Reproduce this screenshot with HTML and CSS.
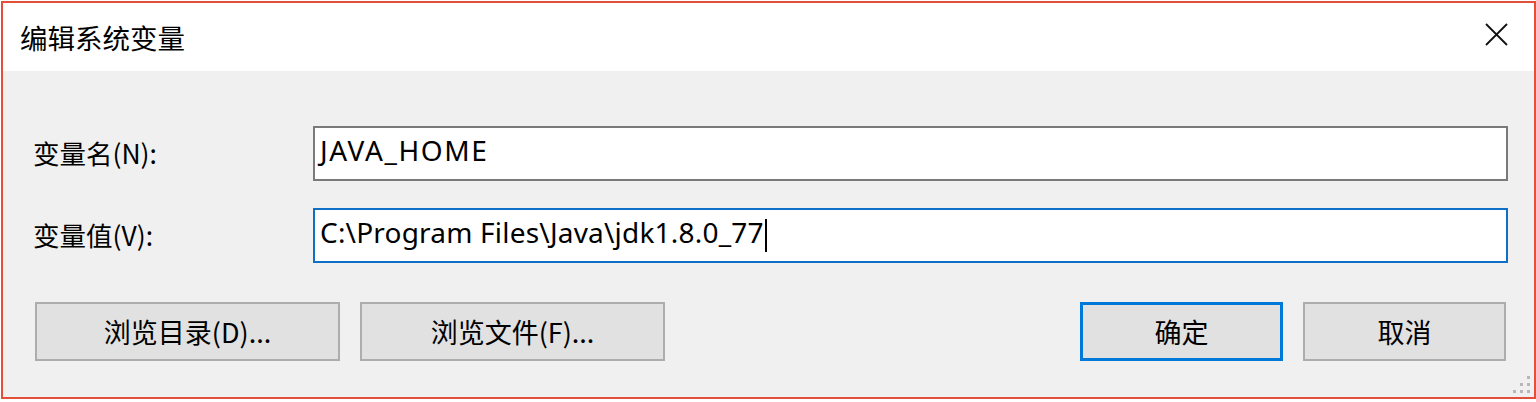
FILE: index.html
```html
<!DOCTYPE html>
<html lang="zh-CN">
<head>
<meta charset="utf-8">
<title>编辑系统变量</title>
<link rel="stylesheet" href="styles.css">
</head>
<body>
<div class="dialog">
  <div class="titlebar">
    <span class="title">编辑系统变量</span>
    <svg class="close" width="23" height="23" viewBox="0 0 23 23"><path d="M1 1 L22 22 M22 1 L1 22" stroke="#111" stroke-width="1.8" fill="none"/></svg>
  </div>
  <div class="content">
    <div class="field">
      <label class="label">变量名(N):</label>
      <div class="input caps">JAVA_HOME</div>
    </div>
    <div class="field">
      <label class="label">变量值(V):</label>
      <div class="input focused">C:\Program Files\Java\jdk1.8.0_77<span class="caret"></span></div>
    </div>
    <div class="buttons">
      <div class="left-buttons">
        <div class="btn wide">浏览目录(D)...</div>
        <div class="btn wide">浏览文件(F)...</div>
      </div>
      <div class="right-buttons">
        <div class="btn default">确定</div>
        <div class="btn">取消</div>
      </div>
    </div>
    <svg class="grip" width="20" height="20" viewBox="0 0 20 20">
      <rect x="15" y="1" width="3" height="3" fill="#b8b8b8"/>
      <rect x="8" y="8" width="3" height="3" fill="#b8b8b8"/>
      <rect x="15" y="8" width="3" height="3" fill="#b8b8b8"/>
      <rect x="1" y="15" width="3" height="3" fill="#b8b8b8"/>
      <rect x="8" y="15" width="3" height="3" fill="#b8b8b8"/>
      <rect x="15" y="15" width="3" height="3" fill="#b8b8b8"/>
    </svg>
  </div>
</div>
</body>
</html>
```
FILE: styles.css
```css
html, body {
  margin: 0;
  padding: 0;
  background: #ffffff;
}
body {
  width: 1536px;
  height: 402px;
  overflow: hidden;
  font-family: "Noto Sans", "Noto Sans CJK SC", sans-serif;
  color: #000;
}
.dialog {
  box-sizing: border-box;
  width: 1535px;
  height: 398px;
  margin: 1px 0 0 1px;
  border: 2px solid #e2503b;
  display: flex;
  flex-direction: column;
  background: #f0f0f0;
}
.titlebar {
  height: 68px;
  background: #ffffff;
  display: flex;
  align-items: center;
  justify-content: space-between;
  padding: 0 26px 0 17px;
  flex-shrink: 0;
}
.title {
  font-family: "Noto Sans CJK SC", sans-serif;
  font-size: 27.5px;
  line-height: 1;
  margin-top: 1px;
}
.close {
  display: block;
  margin-top: -6px;
}
.content {
  position: relative;
  flex: 1;
  padding: 55px 26px 0 30px;
  display: flex;
  flex-direction: column;
}
.field {
  display: flex;
  align-items: center;
  height: 55px;
  margin-bottom: 27px;
}
.field + .field {
  margin-bottom: 39px;
}
.label {
  width: 280px;
  flex-shrink: 0;
  font-family: "Noto Sans CJK SC", sans-serif;
  font-size: 26.5px;
  padding-bottom: 3px;
}
.input {
  box-sizing: border-box;
  flex: 1;
  height: 55px;
  border: 2px solid #7a7a7a;
  background: #ffffff;
  padding: 0 0 8px 5px;
  display: flex;
  align-items: center;
  font-family: "Noto Sans", sans-serif;
  font-size: 28px;
  letter-spacing: 0.2px;
  white-space: pre;
}
.input.caps {
  letter-spacing: 1.6px;
}
.input.focused {
  border-color: #0f6fc6;
}
.caret {
  display: inline-block;
  width: 2px;
  height: 33px;
  background: #000;
  margin-left: 1px;
  margin-top: 8px;
}
.buttons {
  display: flex;
  justify-content: space-between;
  padding-left: 2px;
  padding-right: 2px;
}
.left-buttons, .right-buttons {
  display: flex;
  gap: 20px;
}
.btn {
  box-sizing: border-box;
  width: 203px;
  height: 59px;
  background: #e1e1e1;
  border: 2px solid #adadad;
  display: flex;
  align-items: center;
  justify-content: center;
  font-family: "Noto Sans CJK SC", sans-serif;
  font-size: 27px;
}
.btn.wide {
  width: 305px;
}
.btn.default {
  border: 3px solid #0078d7;
}
.grip {
  position: absolute;
  right: 2px;
  bottom: 2px;
}
```
